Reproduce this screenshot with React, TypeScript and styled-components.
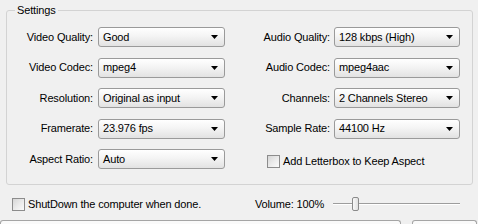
import React from "react";
import styled, { createGlobalStyle } from "styled-components";

const Global = createGlobalStyle`
  html, body { margin: 0; padding: 0; }
  body {
    background: #f0f0f0;
    font-family: "Liberation Sans", Arial, sans-serif;
    font-size: 11px;
    letter-spacing: -0.15px;
    color: #000;
  }
  #root { width: 478px; height: 224px; overflow: hidden; }
`;

const Page = styled.div`
  width: 478px;
  height: 224px;
  padding-top: 4px;
  box-sizing: border-box;
  display: flex;
  flex-direction: column;
`;

const Group = styled.fieldset`
  margin: 0 0 0 6px;
  width: 467px;
  box-sizing: border-box;
  padding: 10px 0 15px 0;
  border: 1px solid #d3d3d3;
  border-radius: 3px;
  min-width: 0;
`;

const Legend = styled.legend`
  margin-left: 8px;
  padding: 0 2px;
  font-size: 11px;
  line-height: 13px;
`;

const Grid = styled.div`
  display: grid;
  grid-template-columns: 91px 127px 109px 126px;
  grid-auto-rows: 20px;
  row-gap: 10.5px;
  align-items: center;
`;

const Label = styled.div<{ $pad: number }>`
  text-align: right;
  padding-right: ${(p) => p.$pad}px;
  white-space: nowrap;
  line-height: 13px;
`;

const Combo = styled.div`
  height: 20px;
  box-sizing: border-box;
  border: 1px solid #9a9a9a;
  border-radius: 3px;
  background: linear-gradient(#ffffff 0%, #f4f4f4 45%, #e2e2e2 100%);
  display: flex;
  align-items: center;
  padding: 0 5px 0 4px;
  justify-content: space-between;
  line-height: 13px;
`;

const Arrow = styled.svg`
  width: 7px;
  height: 4px;
  flex: none;
  margin-right: 1px;
`;

const CheckCell = styled.label<{ $indent: number; $offset?: number }>`
  display: flex;
  align-items: center;
  gap: 3px;
  padding-left: ${(p) => p.$indent}px;
  margin-top: ${(p) => p.$offset ?? 0}px;
  line-height: 13px;
  white-space: nowrap;
`;

const SpanCell = styled.div`
  grid-column: 3 / span 2;
  align-self: stretch;
`;

const Box = styled.span`
  width: 13px;
  height: 13px;
  box-sizing: border-box;
  border: 1px solid #8c8c8c;
  background: linear-gradient(135deg, #d6d6d6 0%, #ececec 55%, #fbfbfb 100%);
  flex: none;
`;

const BottomRow = styled.div`
  display: grid;
  grid-template-columns: 255px auto;
  align-items: center;
  height: 16px;
  margin-top: 11px;
`;

const VolumeWrap = styled.div`
  display: flex;
  align-items: center;
  gap: 9px;
  line-height: 13px;
`;

const Track = styled.div`
  position: relative;
  width: 127px;
  height: 16px;
  &::before {
    content: "";
    position: absolute;
    left: 0;
    right: 0;
    top: 7px;
    height: 1px;
    background: #9d9d9d;
    border-bottom: 1px solid #ffffff;
  }
`;

const Thumb = styled.div`
  position: absolute;
  left: 19px;
  top: 1px;
  width: 7px;
  height: 14px;
  box-sizing: border-box;
  border: 1px solid #8a8a8a;
  border-radius: 2px;
  background: linear-gradient(90deg, #f8f8f8, #e0e0e0);
`;

const Footer = styled.div`
  display: flex;
  gap: 11px;
  margin-top: 8px;
`;

const FooterBox = styled.div<{ $w: number }>`
  width: ${(p) => p.$w}px;
  height: 12px;
  box-sizing: border-box;
  border: 1px solid #a5a5a5;
  border-bottom: none;
  border-radius: 3px 3px 0 0;
  background: #fafafa;
`;

const DownArrow = () => (
  <Arrow viewBox="0 0 7 4">
    <polygon points="0,0 7,0 3.5,4" fill="#000" />
  </Arrow>
);

const Select = ({ value }: { value: string }) => (
  <Combo>
    <span>{value}</span>
    <DownArrow />
  </Combo>
);

const rows: [string, string, string, string][] = [
  ["Video Quality:", "Good", "Audio Quality:", "128 kbps (High)"],
  ["Video Codec:", "mpeg4", "Audio Codec:", "mpeg4aac"],
  ["Resolution:", "Original as input", "Channels:", "2 Channels Stereo"],
  ["Framerate:", "23.976 fps", "Sample Rate:", "44100 Hz"],
];

export default function App() {
  return (
    <>
      <Global />
      <Page>
        <Group>
          <Legend>Settings</Legend>
          <Grid>
            {rows.map(([l1, v1, l2, v2]) => (
              <React.Fragment key={l1}>
                <Label $pad={5}>{l1}</Label>
                <Select value={v1} />
                <Label $pad={4}>{l2}</Label>
                <Select value={v2} />
              </React.Fragment>
            ))}
            <Label $pad={5}>Aspect Ratio:</Label>
            <Select value="Auto" />
            <SpanCell>
              <CheckCell $indent={42} $offset={6}>
                <Box />
                <span>Add Letterbox to Keep Aspect</span>
              </CheckCell>
            </SpanCell>
          </Grid>
        </Group>
        <BottomRow>
          <CheckCell $indent={12}>
            <Box />
            <span>ShutDown the computer when done.</span>
          </CheckCell>
          <VolumeWrap>
            <span>Volume: 100%</span>
            <Track>
              <Thumb />
            </Track>
          </VolumeWrap>
        </BottomRow>
        <Footer>
          <FooterBox $w={401} />
          <FooterBox $w={65} />
        </Footer>
      </Page>
    </>
  );
}
